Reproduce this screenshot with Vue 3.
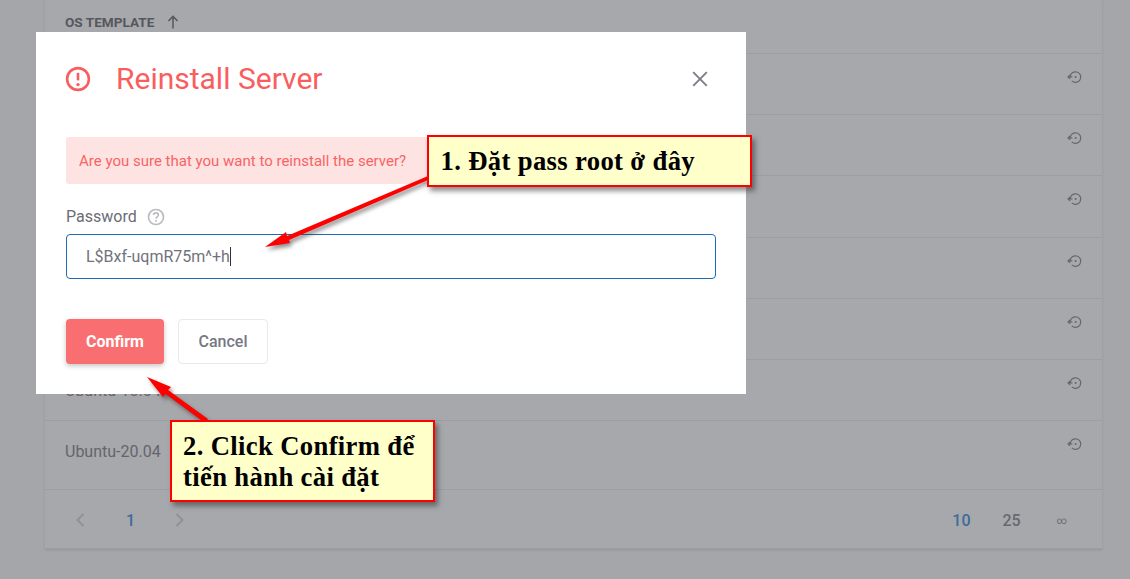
<template>
  <div class="page">
    <!-- table behind the backdrop -->
    <div class="card">
      <div class="head">
        <span>OS TEMPLATE</span>
        <svg class="sort" width="12" height="14" viewBox="0 0 12 14" fill="none" stroke="currentColor" stroke-width="1.5">
          <path d="M6 13.5V1.5M1.4 6 6 1.4 10.6 6" />
        </svg>
      </div>
      <div v-for="row in rows" :key="row.id" class="row" :class="row.cls">
        <span>{{ row.name }}</span>
        <svg class="restore" width="16" height="16" viewBox="0 0 16 16" fill="none" stroke="currentColor" stroke-width="1.2">
          <path d="M3.2 8a5.3 5.3 0 1 1 1.6 3.9" />
          <path d="M.9 7.9h4.4M3.1 5.8 1 7.9l2.1 2" />
          <circle cx="8.6" cy="8" r="1" fill="currentColor" stroke="none" />
        </svg>
      </div>
      <div class="pager">
        <svg class="chev" width="12" height="16" viewBox="0 0 12 16" fill="none" stroke="currentColor" stroke-width="2"><path d="M9.5 2 3.5 8l6 6" /></svg>
        <span class="num active">1</span>
        <svg class="chev" width="12" height="16" viewBox="0 0 12 16" fill="none" stroke="currentColor" stroke-width="2"><path d="M2.5 2l6 6-6 6" /></svg>
        <div class="sizes">
          <span class="num active">10</span>
          <span class="num">25</span>
          <span class="num inf">∞</span>
        </div>
      </div>
    </div>

    <!-- modal -->
    <div class="modal">
      <div class="title-row">
        <svg class="alert" width="26" height="26" viewBox="0 0 26 26" fill="none" stroke="currentColor" stroke-width="2.6">
          <circle cx="13" cy="13" r="10.9" />
          <path d="M13 6.8v7.6" />
          <circle cx="13" cy="18.6" r="1.7" fill="currentColor" stroke="none" />
        </svg>
        <h2>Reinstall Server</h2>
        <svg class="close" width="16" height="16" viewBox="0 0 16 16" fill="none" stroke="currentColor" stroke-width="1.9"><path d="M1.2 1.2l13.6 13.6M14.8 1.2 1.2 14.8" /></svg>
      </div>
      <div class="warn">Are you sure that you want to reinstall the server?</div>
      <div class="label">
        <span>Password</span>
        <svg width="18" height="18" viewBox="0 0 18 18" fill="none" stroke="currentColor" stroke-width="1.7">
          <circle cx="9" cy="9" r="7.5" />
          <path d="M6.6 7.1c0-1.4 1.1-2.3 2.4-2.3s2.4.9 2.4 2.2c0 1.9-2.4 1.9-2.4 3.8" />
          <circle cx="9" cy="13" r="1" fill="currentColor" stroke="none" />
        </svg>
      </div>
      <div class="input"><span>{{ password }}</span><i class="caret"></i></div>
      <div class="actions">
        <button class="confirm">Confirm</button>
        <button class="cancel">Cancel</button>
      </div>
    </div>

    <!-- annotations pasted on top of the screenshot -->
    <svg class="arrows" width="1130" height="579" viewBox="0 0 1130 579">
      <polygon fill="#f00" points="265,247 286,232 287,236 428,176 428,180 289,240 290,243" />
      <polygon fill="#f00" points="147,377 171,387 168,390 208,419 205,423 165.6,394 163,397" />
    </svg>
    <div class="note note-one">1. Đặt pass root ở đây</div>
    <div class="note note-two">2. Click Confirm để tiến hành cài đặt</div>
  </div>
</template>

<script setup>
const password = 'L$Bxf-uqmR75m^+h'

// only the rows that stick out from under the modal have a readable name
const rows = [
  { id: 1, name: '' },
  { id: 2, name: '' },
  { id: 3, name: '' },
  { id: 4, name: '' },
  { id: 5, name: '' },
  { id: 6, name: 'Ubuntu-18.04' },
  { id: 7, name: 'Ubuntu-20.04', cls: 'last' }
]
</script>

<style>
html,
body {
  margin: 0;
  height: 100%;
  overflow: hidden;
  background: #a5a6aa;
}
</style>

<style scoped>
.page {
  position: relative;
  width: 1130px;
  height: 579px;
  overflow: hidden;
  background: #a5a6aa;
  font-family: Roboto, "Liberation Sans", sans-serif;
  color: #64656b;
}

.card {
  width: 1057px;
  height: 549px;
  margin-left: 45px;
  background: #a7a8ac;
  box-shadow: 0 1px 2px rgba(70, 72, 80, 0.18);
}

.head {
  display: flex;
  align-items: center;
  gap: 13px;
  height: 53px;
  padding: 0 20px 9px;
  box-sizing: border-box;
  font-size: 13.6px;
  font-weight: 700;
  color: #56575d;
}

.sort {
  color: #56575d;
}

.row {
  display: flex;
  align-items: center;
  justify-content: space-between;
  height: 61.2px;
  padding: 0 19px 0 20px;
  box-sizing: border-box;
  border-top: 1px solid #9d9ea3;
  font-size: 16px;
}

.row.last {
  height: 69px;
  padding-bottom: 7px;
}

.restore {
  margin-top: -14px;
  color: #66676e;
}

.row.last .restore {
  margin-top: -16px;
}

.pager {
  display: flex;
  align-items: center;
  height: 60px;
  padding: 2px 35px 0 29px;
  border-top: 1px solid #9d9ea3;
  border-bottom: 1px solid #9d9ea3;
  box-sizing: border-box;
  font-size: 16px;
}

.chev {
  color: #909197;
}

.num {
  font-weight: 500;
  color: #68696f;
}

.num.active {
  color: #3e6b9b;
}

.pager > .num {
  margin: 0 39px 0 40px;
}

.sizes {
  display: flex;
  align-items: center;
  gap: 32px;
  margin-left: auto;
}

.inf {
  margin-left: 4px;
  font-size: 10px;
  font-weight: 400;
}

.modal {
  position: absolute;
  left: 36px;
  top: 32px;
  width: 710px;
  height: 362px;
  padding: 0 30px;
  box-sizing: border-box;
  background: #fff;
}

.title-row {
  display: flex;
  align-items: center;
  height: 94px;
  color: #f95e5f;
}

.alert {
  flex: none;
  margin-left: -1px;
}

.title-row h2 {
  margin: 0 0 0 25px;
  font-size: 30px;
  font-weight: 400;
  line-height: 1;
}

.close {
  margin-left: auto;
  margin-right: 8px;
  color: #7b7e86;
}

.warn {
  height: 47px;
  margin-top: 11px;
  padding: 0 13px;
  border-radius: 3px;
  background: #fee3e3;
  color: #f96364;
  font-size: 15px;
  line-height: 48px;
}

.label {
  display: flex;
  align-items: center;
  gap: 10px;
  margin-top: 23px;
  font-size: 16px;
  color: #6b6d74;
}

.label svg {
  color: #bbbcc0;
}

.input {
  display: flex;
  align-items: center;
  height: 45px;
  margin-top: 8px;
  padding: 0 19px;
  box-sizing: border-box;
  border: 1px solid #1e6cb4;
  border-radius: 4px;
  font-size: 16px;
  color: #71737a;
}

.caret {
  width: 1px;
  height: 19px;
  background: #333;
}

.actions {
  display: flex;
  gap: 14px;
  margin-top: 40px;
}

button {
  height: 45px;
  border-radius: 4px;
  font-family: inherit;
  font-size: 16px;
  font-weight: 500;
}

.confirm {
  width: 98px;
  border: 0;
  background: #f96f71;
  color: #fff;
  font-weight: 700;
  box-shadow: 0 2px 5px rgba(90, 90, 90, 0.35);
}

.cancel {
  width: 90px;
  border: 1px solid #e9e9ec;
  background: #fff;
  color: #757883;
}

.arrows {
  position: absolute;
  left: 0;
  top: 0;
  filter: drop-shadow(2px 3px 2px rgba(60, 60, 60, 0.6));
}

.note {
  position: absolute;
  box-sizing: border-box;
  border: 2px solid #f00;
  background: #ffffc9;
  box-shadow: 3px 4px 5px rgba(50, 50, 50, 0.55);
  color: #000;
  font-family: "Liberation Serif", "Times New Roman", serif;
  font-size: 26.67px;
  font-weight: 700;
  letter-spacing: 0.35px;
  line-height: 31px;
}

.note-one {
  left: 427px;
  top: 135px;
  width: 325px;
  height: 52px;
  padding: 9px 11.5px;
}

.note-two {
  left: 170px;
  top: 420px;
  width: 265px;
  height: 82px;
  padding: 9px 11px;
}
</style>
